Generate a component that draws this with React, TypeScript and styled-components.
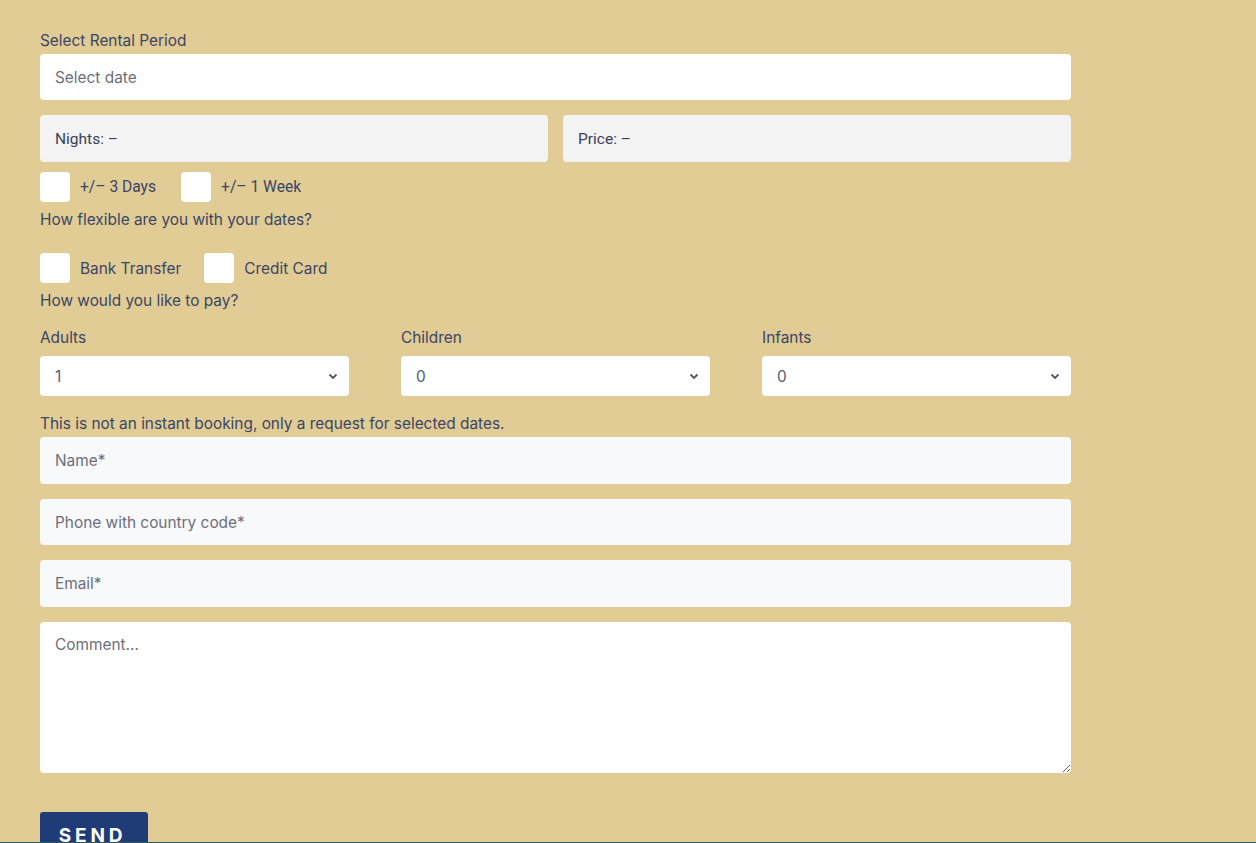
import React from "react";
import styled, { createGlobalStyle } from "styled-components";

const GlobalStyle = createGlobalStyle`
  html, body {
    margin: 0;
    padding: 0;
    background: #e0cc94;
    font-family: "Inter", "Noto Sans", sans-serif;
    color: #3d4466;
  }
  * { box-sizing: border-box; }
`;

const Page = styled.div`
  padding: 31px 40px 0 40px;
  width: 1111px;
  height: 843px;
  overflow: hidden;
`;

const Form = styled.form`
  display: flex;
  flex-direction: column;
`;

const Label = styled.div<{ $mt?: number; $mb?: number }>`
  font-size: 15.4px;
  line-height: 19px;
  margin-top: ${(p) => p.$mt || 0}px;
  margin-bottom: ${(p) => p.$mb || 0}px;
`;

const TextInput = styled.input<{ $bg?: string; $h?: number; $mb?: number }>`
  width: 100%;
  height: ${(p) => p.$h || 46}px;
  border: none;
  border-radius: 4px;
  background: ${(p) => p.$bg || "#fff"};
  padding: 0 15px;
  font-family: "Inter", sans-serif;
  font-size: 15.4px;
  color: #3d4466;
  margin-bottom: ${(p) => p.$mb || 0}px;
  outline: none;
  &::placeholder { color: #6c6f7a; }
`;

const Row = styled.div`
  display: flex;
  gap: 15px;
  margin-top: 15px;
`;

const InfoBox = styled.div`
  flex: 1;
  height: 47px;
  background: #f3f3f3;
  border-radius: 4px;
  padding: 0 15px;
  display: flex;
  align-items: center;
  font-family: "Roboto", sans-serif;
  font-size: 15.5px;
  color: #3a3f5c;
`;

const CheckRow = styled.div<{ $mt: number }>`
  display: flex;
  align-items: center;
  margin-top: ${(p) => p.$mt}px;
  height: 30px;
`;

const CheckItem = styled.label<{ $gap: number }>`
  display: flex;
  align-items: center;
  margin-right: ${(p) => p.$gap}px;
  font-size: 15.4px;
`;

const Box = styled.span`
  width: 30px;
  height: 30px;
  background: #fff;
  border-radius: 4px;
  margin-right: 10px;
`;

const RobotoText = styled.span`
  font-family: "Roboto", sans-serif;
  font-size: 15.6px;
`;

const Guests = styled.div`
  display: flex;
  gap: 52px;
  margin-top: 18px;
`;

const GuestCol = styled.div`
  flex: 1;
  display: flex;
  flex-direction: column;
`;

const SelectBox = styled.div`
  margin-top: 9px;
  height: 40px;
  background: #fff;
  border-radius: 4px;
  display: flex;
  align-items: center;
  justify-content: space-between;
  padding: 0 10px 0 15px;
  font-size: 15.4px;
  color: #555a70;
`;

const TextArea = styled.textarea`
  width: 100%;
  height: 151px;
  border: none;
  border-radius: 4px;
  background: #fff;
  padding: 13px 15px;
  font-family: "Inter", sans-serif;
  font-size: 15.4px;
  outline: none;
  resize: vertical;
  display: block;
  &::placeholder { color: #6c6f7a; }
`;

const SendButton = styled.button`
  margin-top: 39px;
  width: 108px;
  height: 50px;
  background: #1f3b78;
  color: #fff;
  border: none;
  border-radius: 3px;
  font-family: "Inter", sans-serif;
  font-weight: 700;
  font-size: 19px;
  letter-spacing: 3.8px;
  padding: 12px 3px 0 0;
  align-self: flex-start;
  display: flex;
  justify-content: center;
  align-items: flex-start;
`;

const BottomLine = styled.div`
  position: fixed;
  left: 0;
  right: 0;
  bottom: 0;
  height: 1px;
  background: #2e5a5e;
`;

const Chevron = () => (
  <svg width="12" height="12" viewBox="0 0 12 12">
    <path d="M2.5 4.5 L6 8 L9.5 4.5" stroke="#555" strokeWidth="1.8" fill="none" />
  </svg>
);

const App = () => {
  const guests = [
    { label: "Adults", value: "1" },
    { label: "Children", value: "0" },
    { label: "Infants", value: "0" },
  ];
  return (
    <Page>
      <GlobalStyle />
      <Form onSubmit={(e) => e.preventDefault()}>
        <Label $mb={4}>Select Rental Period</Label>
        <TextInput placeholder="Select date" />
        <Row>
          <InfoBox>Nights: –</InfoBox>
          <InfoBox>Price: –</InfoBox>
        </Row>
        <CheckRow $mt={10}>
          <CheckItem $gap={25}>
            <Box />
            <RobotoText>+/– 3 Days</RobotoText>
          </CheckItem>
          <CheckItem $gap={25}>
            <Box />
            <RobotoText>+/– 1 Week</RobotoText>
          </CheckItem>
        </CheckRow>
        <Label $mt={8}>How flexible are you with your dates?</Label>
        <CheckRow $mt={24}>
          <CheckItem $gap={23}>
            <Box />
            Bank Transfer
          </CheckItem>
          <CheckItem $gap={23}>
            <Box />
            Credit Card
          </CheckItem>
        </CheckRow>
        <Label $mt={8}>How would you like to pay?</Label>
        <Guests>
          {guests.map((g) => (
            <GuestCol key={g.label}>
              <Label>{g.label}</Label>
              <SelectBox>
                {g.value}
                <Chevron />
              </SelectBox>
            </GuestCol>
          ))}
        </Guests>
        <Label $mt={18} $mb={4}>
          This is not an instant booking, only a request for selected dates.
        </Label>
        <TextInput $bg="#f8f9fb" $h={47} $mb={15} placeholder="Name*" />
        <TextInput $bg="#f8f9fb" $h={46} $mb={15} placeholder="Phone with country code*" />
        <TextInput $bg="#f8f9fb" $h={47} $mb={15} placeholder="Email*" />
        <TextArea placeholder="Comment..." />
        <SendButton>SEND</SendButton>
      </Form>
      <BottomLine />
    </Page>
  );
};

export default App;
